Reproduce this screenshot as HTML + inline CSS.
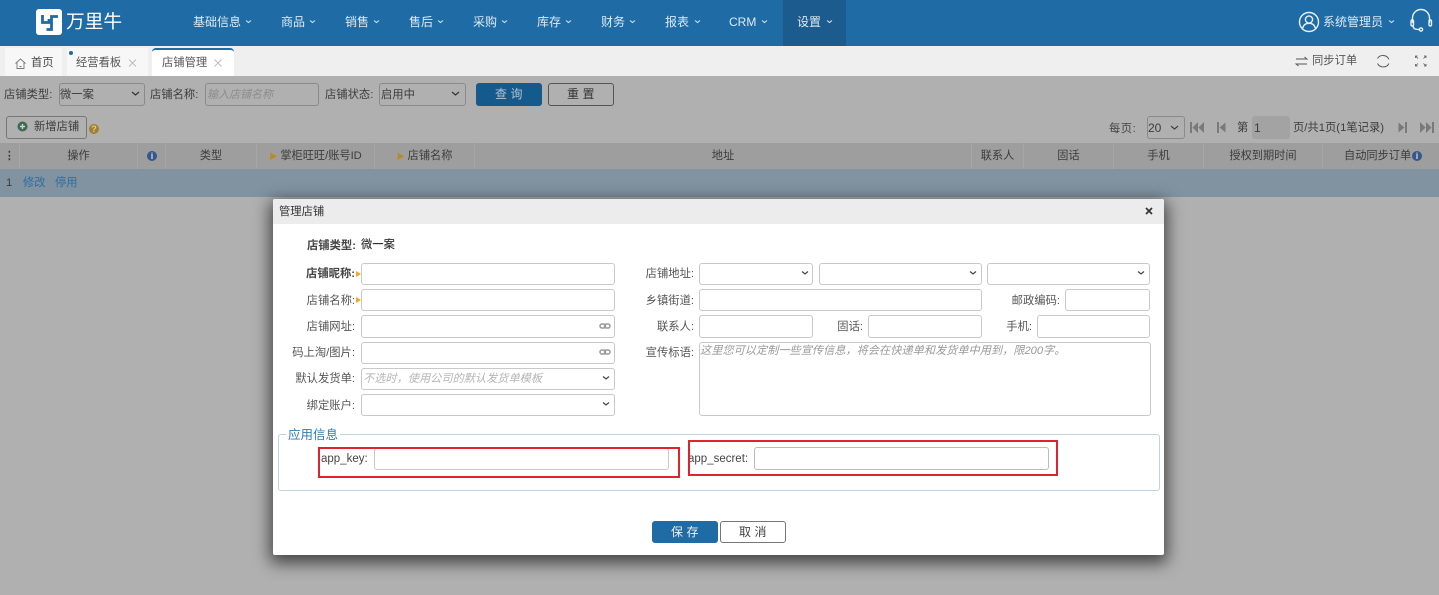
<!DOCTYPE html>
<html lang="zh"><head><meta charset="utf-8"><title>店铺管理</title>
<style>
html,body{margin:0;padding:0;width:1439px;height:595px;overflow:hidden;background:#b0b0b0;font-family:"Liberation Sans","Noto Sans CJK SC",sans-serif;font-size:11.300px;color:#333}
.a{position:absolute;box-sizing:border-box}
.t{position:absolute;white-space:nowrap;line-height:16px;height:16px}
.n{color:#dfeaf3;font-size:12px;line-height:18px;height:18px;top:13px}
.o{color:#3c3c3c}
.i{position:absolute;box-sizing:border-box;background:#fff;border:1px solid #c9c9c9;border-radius:3px}
.f{position:absolute;box-sizing:border-box;border:1px solid #8a8a8a;border-radius:3px;background:#b0b0b0}
.l{color:#555;text-align:right}
.h{position:absolute;top:143px;height:26px;line-height:26px;text-align:center;color:#3c3c3c;border-right:1px solid #a6a6a6;box-sizing:border-box;white-space:nowrap;font-size:11.200px}
svg{position:absolute;overflow:visible}
</style></head><body>
<!-- header -->
<div class="a" style="left:0;top:0;width:1439px;height:46px;background:#1f6ba5"></div>
<div class="a" style="left:783px;top:0;width:63px;height:46px;background:#1c5b8d"></div>
<div class="a" style="left:36px;top:9px;width:26px;height:26px;background:#fff;border-radius:3px"></div>
<svg style="left:36px;top:9px" width="26" height="26" viewBox="0 0 26 26" fill="none" stroke="#1f6ba5" stroke-width="2.800"><path d="M6.500 6v7.500h6.500v-3.500"/><path d="M22 7.500H15.500V20.500H10.500"/></svg>
<div class="t" style="left:66px;top:10px;height:24px;line-height:24px;font-size:18.700px;color:#fff">万里牛</div>
<span class="t n" style="left:193px">基础信息</span><span class="t n" style="left:281px">商品</span><span class="t n" style="left:345px">销售</span><span class="t n" style="left:409px">售后</span><span class="t n" style="left:473px">采购</span><span class="t n" style="left:537px">库存</span><span class="t n" style="left:601px">财务</span><span class="t n" style="left:665px">报表</span><span class="t n" style="left:729px">CRM</span><span class="t n" style="left:797px">设置</span><span class="t n" style="left:1323px">系统管理员</span>
<svg style="left:0;top:0" width="1439" height="46" fill="none" stroke="#cfe0ee" stroke-width="1.100"><path d="M246 20.500l2.500 2 2.500-2M310 20.500l2.500 2 2.500-2M374 20.500l2.500 2 2.500-2M438 20.500l2.500 2 2.500-2M502 20.500l2.500 2 2.500-2M566 20.500l2.500 2 2.500-2M630 20.500l2.500 2 2.500-2M695 20.500l2.500 2 2.500-2M762 20.500l2.500 2 2.500-2M827 20.500l2.500 2 2.500-2M1389 20.500l2.500 2 2.500-2"/>
<g stroke="#e8f0f7" stroke-width="1.400"><circle cx="1309" cy="22" r="9.500"/><circle cx="1309" cy="19.500" r="3.600"/><path d="M1302.500 28.500c1-4 3.500-5.200 6.500-5.200s5.500 1.200 6.500 5.200"/>
<path d="M1412.500 23v-5a8.500 8.500 0 0 1 17 0v5"/><rect x="1411" y="20" width="2.500" height="6" rx="1.200"/><rect x="1429" y="20" width="2.500" height="6" rx="1.200"/><path d="M1413 26c.5 3 2.500 3.500 6 3.500"/><circle cx="1421" cy="29.500" r="1.600"/></g></svg>
<!-- tabs -->
<div class="a" style="left:0;top:46px;width:1439px;height:30px;background:#efefef"></div>
<div class="a" style="left:5px;top:48px;width:57px;height:28px;background:#f7f7f7"></div>
<div class="a" style="left:67px;top:48px;width:81px;height:28px;background:#f7f7f7"></div>
<div class="a" style="left:152px;top:48px;width:82px;height:28px;background:#fff;border-top:2px solid #1f6ba5;border-radius:4px 4px 0 0"></div>
<div class="a" style="left:69px;top:51px;width:4px;height:4px;border-radius:50%;background:#1f6ba5"></div>
<svg style="left:15px;top:58px" width="11" height="11" fill="none" stroke="#777" stroke-width=".9"><path d="M.5 5.500L5.500 1l5 4.500M2 4.500v6h7v-6M4.500 8.500h2"/></svg>
<span class="t" style="left:31px;top:55px;color:#444">首页</span><span class="t" style="left:76px;top:55px;color:#555">经营看板</span><span class="t" style="left:162px;top:55px;color:#555">店铺管理</span>
<svg style="left:0;top:46px" width="1439" height="30" fill="none" stroke="#bbb" stroke-width=".9"><path d="M129 13.500l7 7M136 13.500l-7 7M214.500 13.500l7 7M221.500 13.500l-7 7"/>
<g stroke="#555"><path d="M1296 13h11l-2.500-2M1307 18h-11l2.500 2"/><path d="M1377.500 12.500a6.500 6.500 0 0 1 11.500 1M1389 17.500a6.500 6.500 0 0 1-11.500 0"/><path d="M1415.500 12v-2h2M1424 10h2v2M1415.500 18v2h2M1426 18v2h-2M1416 10.500l2 2M1425.500 10.500l-2 2M1416 19.500l2-2M1425.500 19.500l-2-2" stroke-width=".8"/></g></svg>
<span class="t" style="left:1312px;top:53px;color:#555">同步订单</span>
<!-- filter (under overlay) -->
<div class="a" style="left:0;top:76px;width:1439px;height:67px;background:#b0b0b0"></div>
<span class="t o" style="left:4px;top:87px">店铺类型:</span>
<div class="f" style="left:59px;top:83px;width:86px;height:23px"></div><span class="t o" style="left:60px;top:87px">微一案</span>
<span class="t o" style="left:150px;top:87px">店铺名称:</span>
<div class="f" style="left:205px;top:83px;width:114px;height:23px"></div><span class="t" style="left:207px;top:87px;color:#8c8c8c;font-style:italic;font-size:11px">输入店铺名称</span>
<span class="t o" style="left:325px;top:87px">店铺状态:</span>
<div class="f" style="left:379px;top:83px;width:87px;height:23px"></div><span class="t o" style="left:381px;top:87px">启用中</span>
<div class="a" style="left:476px;top:83px;width:66px;height:23px;background:#155a8c;border-radius:3px;color:#b4c4d0;text-align:center;line-height:22px;letter-spacing:3.500px;padding-left:3px;font-size:12px">查询</div>
<div class="f" style="left:548px;top:83px;width:66px;height:23px;color:#333;text-align:center;line-height:21px;letter-spacing:3.500px;padding-left:3px;border-color:#555;font-size:12px">重置</div>
<svg style="left:0;top:76px" width="600" height="30" fill="none" stroke="#333" stroke-width="1.200"><path d="M132 16l3.500 3 3.500-3M452 16l3.500 3 3.500-3"/></svg>
<div class="f" style="left:6px;top:116px;width:81px;height:23px;border-color:#777"></div>
<svg style="left:17px;top:121px" width="12" height="12"><circle cx="5.500" cy="5.500" r="5" fill="#3e6a52"/><path d="M3 5.500h5M5.500 3v5" stroke="#c8d4cc" stroke-width="1.400"/></svg>
<span class="t o" style="left:34px;top:119px">新增店铺</span>
<div class="a" style="left:89px;top:124px;width:10px;height:10px;border-radius:50%;background:#a3802f;color:#d8c89c;font-size:9px;line-height:10px;text-align:center;font-weight:bold">?</div>
<!-- pagination -->
<span class="t o" style="left:1109px;top:121px;color:#444;letter-spacing:.5px">每页:</span>
<div class="f" style="left:1147px;top:116px;width:38px;height:23px"></div><span class="t o" style="left:1148px;top:120px;font-size:12px">20</span>
<svg style="left:0;top:116px" width="1439" height="24" fill="#7a7a7a"><path d="M1171 10l3.500 3 3.500-3" fill="none" stroke="#333" stroke-width="1.100"/>
<path d="M1190 6h2v11h-2zM1198 6v11l-5.500-5.500zM1204 6v11l-5.500-5.500zM1217 6h2v11h-2zM1225.500 6.500v10l-6-5zM1398.500 6.500v10l6-5zM1405 6h2v11h-2zM1420 6v11l5.500-5.500zM1426 6v11l5.500-5.500zM1432 6h2v11h-2z"/></svg>
<span class="t o" style="left:1237px;top:120px">第</span>
<div class="a" style="left:1252px;top:116px;width:38px;height:23px;background:#a3a3a3;border-radius:3px"></div><span class="t o" style="left:1254px;top:120px;font-size:12px">1</span>
<span class="t o" style="left:1293px;top:120px">页/共1页(1笔记录)</span>
<!-- table -->
<div class="a" style="left:0;top:143px;width:1439px;height:26px;background:#9e9e9e"></div>
<div class="a" style="left:0;top:169px;width:1439px;height:28px;background:#8193a1"></div>
<div class="h" style="left:0;width:20px;font-weight:bold">⋮</div>
<div class="h" style="left:20px;width:118px">操作</div>
<div class="h" style="left:138px;width:28px"></div>
<div class="h" style="left:166px;width:91px">类型</div>
<div class="h" style="left:257px;width:118px"><span style="color:#b98a25;font-size:8px">▶</span> 掌柜旺旺/账号ID</div>
<div class="h" style="left:375px;width:100px"><span style="color:#b98a25;font-size:8px">▶</span> 店铺名称</div>
<div class="h" style="left:475px;width:497px">地址</div>
<div class="h" style="left:972px;width:52px">联系人</div>
<div class="h" style="left:1024px;width:90px">固话</div>
<div class="h" style="left:1114px;width:90px">手机</div>
<div class="h" style="left:1204px;width:119px">授权到期时间</div>
<div class="h" style="left:1323px;width:116px;border:0;text-align:left;padding-left:21px">自动同步订单</div>
<div class="a" style="left:147px;top:151px;width:10px;height:10px;border-radius:50%;background:#35578a;color:#cdd5e0;font-size:9px;font-weight:bold;line-height:10px;text-align:center">i</div>
<div class="a" style="left:1412px;top:151px;width:10px;height:10px;border-radius:50%;background:#35578a;color:#cdd5e0;font-size:9px;font-weight:bold;line-height:10px;text-align:center">i</div>
<span class="t o" style="left:6px;top:175px">1</span><span class="t" style="left:23px;top:175px;color:#2e6c9e">修改</span><span class="t" style="left:55px;top:175px;color:#2e6c9e">停用</span>
<!-- dialog -->
<div class="a" style="left:273px;top:199px;width:891px;height:356px;background:#fff;border-radius:2px;box-shadow:0 5px 16px 3px rgba(0,0,0,.62)"></div>
<div class="a" style="left:273px;top:199px;width:891px;height:25px;background:#ececec;border-radius:2px 2px 0 0"></div>
<span class="t" style="left:279px;top:204px;color:#333;font-size:11.300px">管理店铺</span>
<svg style="left:1145px;top:207px" width="8" height="8" stroke="#333" stroke-width="1.700"><path d="M1 1l6 6M7 1l-6 6"/></svg>
<span class="t" style="left:307px;top:238px;font-weight:bold;color:#444;font-size:11.300px">店铺类型:</span><span class="t" style="left:361px;top:237px;color:#333;font-size:11.300px;font-weight:500">微一案</span>
<span class="t l" style="left:288px;width:67px;top:266px;font-weight:bold;color:#444">店铺昵称:</span>
<span class="t l" style="left:288px;width:67px;top:293px">店铺名称:</span>
<span class="t l" style="left:288px;width:67px;top:319px">店铺网址:</span>
<span class="t l" style="left:288px;width:67px;top:345px">码上淘/图片:</span>
<span class="t l" style="left:288px;width:67px;top:371px">默认发货单:</span>
<span class="t l" style="left:288px;width:67px;top:398px">绑定账户:</span>
<svg style="left:356px;top:270px" width="6" height="40" fill="#f5a623"><path d="M0 1l5 3-5 3zM0 27l5 3-5 3z"/></svg>
<div class="i" style="left:361px;top:263px;width:254px;height:22px"></div>
<div class="i" style="left:361px;top:289px;width:254px;height:22px"></div>
<div class="i" style="left:361px;top:315px;width:254px;height:23px"></div>
<div class="i" style="left:361px;top:342px;width:254px;height:22px"></div>
<div class="i" style="left:361px;top:368px;width:254px;height:22px"></div>
<div class="i" style="left:361px;top:394px;width:254px;height:22px"></div>
<span class="t" style="left:363px;top:371px;color:#b5b5b5;font-style:italic;font-size:11.200px">不选时，使用公司的默认发货单模板</span>
<span class="t l" style="left:630px;width:64px;top:266px">店铺地址:</span>
<span class="t l" style="left:630px;width:64px;top:293px">乡镇街道:</span>
<span class="t l" style="left:630px;width:64px;top:319px">联系人:</span>
<span class="t l" style="left:630px;width:64px;top:345px">宣传标语:</span>
<span class="t l" style="left:995px;width:65px;top:293px">邮政编码:</span>
<span class="t l" style="left:820px;width:43px;top:319px">固话:</span>
<span class="t l" style="left:990px;width:42px;top:319px">手机:</span>
<div class="i" style="left:699px;top:263px;width:114px;height:22px"></div>
<div class="i" style="left:819px;top:263px;width:163px;height:22px"></div>
<div class="i" style="left:987px;top:263px;width:163px;height:22px"></div>
<div class="i" style="left:699px;top:289px;width:283px;height:22px"></div>
<div class="i" style="left:1065px;top:289px;width:85px;height:22px"></div>
<div class="i" style="left:699px;top:315px;width:114px;height:23px"></div>
<div class="i" style="left:868px;top:315px;width:114px;height:23px"></div>
<div class="i" style="left:1037px;top:315px;width:113px;height:23px"></div>
<div class="i" style="left:699px;top:342px;width:452px;height:74px"></div>
<span class="t" style="left:700px;top:343px;color:#9a9a9a;font-style:italic;font-size:11.200px">这里您可以定制一些宣传信息，将会在快递单和发货单中用到，限200字。</span>
<svg style="left:0;top:0" width="1439" height="595" fill="none" stroke="#444" stroke-width="1.200"><path d="M603 376.500l3 2.500 3-2.500M603 402.500l3 2.500 3-2.500M802 271.500l3 2.500 3-2.500M970 271.500l3 2.500 3-2.500M1138 271.500l3 2.500 3-2.500"/>
<g stroke="#999" stroke-width="1.500"><rect x="600" y="324" width="5.500" height="4" rx="2"/><rect x="604.500" y="324" width="5.500" height="4" rx="2"/><rect x="600" y="350" width="5.500" height="4" rx="2"/><rect x="604.500" y="350" width="5.500" height="4" rx="2"/></g></svg>
<!-- fieldset -->
<div class="a" style="left:278px;top:434px;width:882px;height:57px;border:1px solid #c0d3e0;border-radius:3px"></div>
<div class="a" style="left:286px;top:428px;width:54px;height:14px;background:#fff"></div>
<span class="t" style="left:288px;top:427px;color:#2d7bb0;font-size:12.500px">应用信息</span>
<span class="t" style="left:321px;top:451px;color:#444;font-size:11.500px">app_key:</span>
<div class="i" style="left:374px;top:448px;width:295px;height:22px"></div>
<span class="t" style="left:688px;top:451px;color:#444;font-size:11.500px">app_secret:</span>
<div class="i" style="left:754px;top:447px;width:295px;height:23px;border-color:#bbb"></div>
<div class="a" style="left:318px;top:447px;width:362px;height:31px;border:2px solid #e0222f"></div>
<div class="a" style="left:688px;top:440px;width:370px;height:36px;border:2px solid #e0222f"></div>
<div class="a" style="left:652px;top:521px;width:66px;height:22px;background:#1f6ba5;border-radius:3px;color:#eaf1f7;text-align:center;line-height:23px;letter-spacing:3.500px;padding-left:3px;font-size:12px">保存</div>
<div class="a" style="left:720px;top:521px;width:66px;height:22px;background:#fff;border:1px solid #777;border-radius:3px;color:#444;text-align:center;line-height:21px;letter-spacing:3.500px;padding-left:3px;font-size:12px">取消</div>
</body></html>
